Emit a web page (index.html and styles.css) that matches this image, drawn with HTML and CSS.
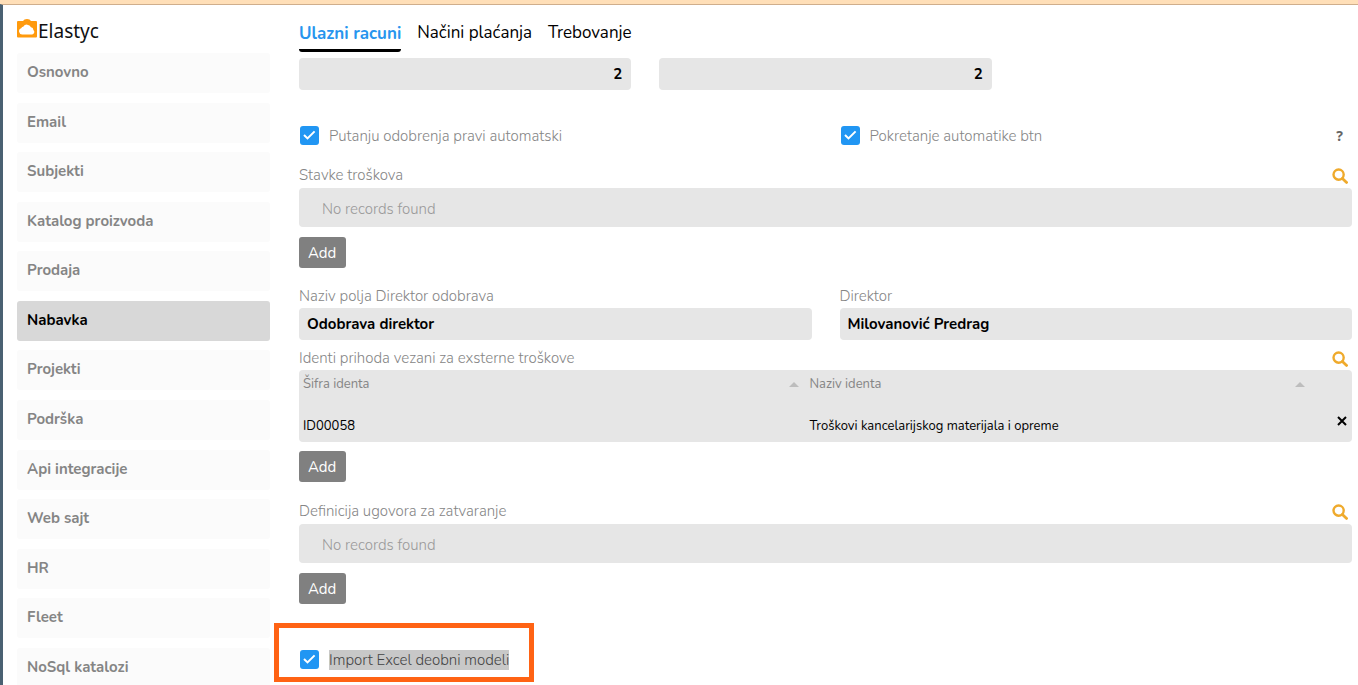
FILE: index.html
```html
<!DOCTYPE html>
<html lang="sr">
<head>
  <meta charset="utf-8">
  <meta name="viewport" content="width=device-width, initial-scale=1.0">
  <title>Elastyc</title>
  <link rel="stylesheet" href="styles.css">
</head>

<body>
  <svg class="defs" aria-hidden="true">
    <symbol id="search" viewBox="0 0 16 16">
      <circle cx="6.6" cy="6.6" r="5.1" fill="none" stroke="currentColor" stroke-width="2.4"/>
      <path d="M10.4 10.4L14.6 14.4" stroke="currentColor" stroke-width="2.8" stroke-linecap="round"/>
    </symbol>
  </svg>

  <div class="page">
    <aside class="sidebar">
      <a class="logo" href="#">
        <svg width="20" height="20" viewBox="0 0 20 20" aria-hidden="true">
          <path d="M0 3Q0 2 1 2H6Q7 0 10 0T14 2H19Q20 2 20 3V17.500Q20 18.500 19 18.500H1Q0 18.500 0 17.500Z" fill="#ff9a0d"/>
          <path d="M5.200 15.600A3.300 3.300 0 0 1 4.200 9.200Q5 7.800 6.200 7.800A4.400 4.400 0 0 1 14 8.200A2.800 2.800 0 0 1 16.400 10.900A2.700 2.700 0 0 1 15.200 15.600Z" fill="#fff"/>
        </svg>
        <span>Elastyc</span>
      </a>
      <nav class="menu">
        <a href="#">Osnovno</a>
        <a href="#">Email</a>
        <a href="#">Subjekti</a>
        <a href="#">Katalog proizvoda</a>
        <a href="#">Prodaja</a>
        <a href="#" class="active">Nabavka</a>
        <a href="#">Projekti</a>
        <a href="#">Podrška</a>
        <a href="#">Api integracije</a>
        <a href="#">Web sajt</a>
        <a href="#">HR</a>
        <a href="#">Fleet</a>
        <a href="#">NoSql katalozi</a>
      </nav>
    </aside>

    <main class="content">
      <div class="tabs">
        <a href="#" class="active">Ulazni racuni</a>
        <a href="#">Načini plaćanja</a>
        <a href="#">Trebovanje</a>
      </div>

      <div class="row thirds">
        <input class="field number" type="text" value="2" aria-label="Broj 1">
        <input class="field number" type="text" value="2" aria-label="Broj 2">
      </div>

      <div class="row halves checks">
        <label class="check"><input type="checkbox" checked><span>Putanju odobrenja pravi automatski</span></label>
        <div class="with-help">
          <label class="check"><input type="checkbox" checked><span>Pokretanje automatike btn</span></label>
          <button class="help" type="button">?</button>
        </div>
      </div>

      <section class="list">
        <div class="caption">
          <h2>Stavke troškova</h2>
          <button class="search" type="button" aria-label="Search"><svg><use href="#search"/></svg></button>
        </div>
        <div class="empty">No records found</div>
        <button class="add" type="button">Add</button>
      </section>

      <div class="row halves people">
        <div>
          <label for="polje">Naziv polja Direktor odobrava</label>
          <input class="field" id="polje" type="text" value="Odobrava direktor">
        </div>
        <div>
          <label for="direktor">Direktor</label>
          <input class="field" id="direktor" type="text" value="Milovanović Predrag">
        </div>
      </div>

      <section class="list idents">
        <div class="caption">
          <h2>Identi prihoda vezani za exsterne troškove</h2>
          <button class="search" type="button" aria-label="Search"><svg><use href="#search"/></svg></button>
        </div>
        <table>
          <thead>
            <tr>
              <th><div class="sort">Šifra identa</div></th>
              <th><div class="sort">Naziv identa</div></th>
              <th class="tools"></th>
            </tr>
          </thead>
          <tbody>
            <tr>
              <td>ID00058</td>
              <td>Troškovi kancelarijskog materijala i opreme</td>
              <td class="tools">
                <button class="remove" type="button" aria-label="Remove">
                  <svg viewBox="0 0 10 10"><path d="M1 1L9 9M9 1L1 9" stroke="currentColor" stroke-width="2"/></svg>
                </button>
              </td>
            </tr>
          </tbody>
        </table>
        <button class="add" type="button">Add</button>
      </section>

      <section class="list">
        <div class="caption">
          <h2>Definicija ugovora za zatvaranje</h2>
          <button class="search" type="button" aria-label="Search"><svg><use href="#search"/></svg></button>
        </div>
        <div class="empty">No records found</div>
        <button class="add" type="button">Add</button>
      </section>

      <div class="callout">
        <label class="check"><input type="checkbox" checked><span class="selected">Import Excel deobni modeli</span></label>
      </div>
    </main>
  </div>
</body>
</html>
```

FILE: styles.css
```css
* {
  box-sizing: border-box;
}
body {
  margin: 0;
  height: 100vh;
  overflow: hidden;
  display: flex;
  flex-direction: column;
  border-top: 4px solid #ffdfb8;
  background: #fff;
  color: #858585;
  font-family: Nunito, Lato, sans-serif;
  font-size: 15px;
  font-weight: 300;
  line-height: 20px;
}
a {
  color: inherit;
  text-decoration: none;
}
button,
input {
  font-family: inherit;
}
button {
  padding: 0;
  border: 0;
  background: none;
  cursor: pointer;
}
.defs {
  position: absolute;
  width: 0;
  height: 0;
}
.page {
  flex: 1;
  min-height: 0;
  display: flex;
  gap: 29px;
  padding: 0 6px 0 14px;
  border-top: 1px solid #cfae8c;
  border-left: 3px solid #4a6172;
}

/* sidebar */
.sidebar {
  flex: 0 0 253px;
  display: flex;
  flex-direction: column;
}
.logo {
  display: flex;
  gap: 1px;
  height: 48px;
  padding-top: 14px;
  color: #111;
  font-family: "Noto Sans", sans-serif;
  font-size: 19px;
  font-weight: 400;
}
.logo svg {
  flex: none;
}
.logo span {
  line-height: 24px;
}
.menu {
  flex: 1;
  display: flex;
  flex-direction: column;
  justify-content: space-between;
  margin-bottom: -3px;
}
.menu a {
  flex: none;
  height: 40px;
  padding: 0 10px;
  border-radius: 3px;
  background: #fbfbfb;
  font-weight: 700;
  line-height: 38px;
}
.menu a.active {
  background: #d8d8d8;
  color: #000;
}

/* content */
.content {
  flex: 1;
  min-width: 0;
}
.tabs {
  display: flex;
  gap: 16px;
  margin-bottom: 6px;
  color: #000;
  font-size: 17px;
  font-weight: 400;
  line-height: 22px;
}
.tabs a {
  padding: 17px 0 5px;
}
.tabs a.active {
  padding-top: 18px;
  padding-bottom: 4px;
  border-bottom: 3px solid #000;
  border-radius: 0 0 3px 3px;
  color: #2795ee;
  font-weight: 700;
}
.row {
  display: grid;
  column-gap: 28px;
}
.thirds {
  grid-template-columns: repeat(3, 1fr);
}
.halves {
  grid-template-columns: repeat(2, 1fr);
}
.field {
  display: block;
  width: 100%;
  height: 32px;
  padding: 0 8px;
  border: 0;
  border-radius: 4px;
  background: #e6e6e6;
  color: #000;
  font-size: 15px;
  font-weight: 700;
}
.number {
  padding-right: 9px;
  text-align: right;
}
.checks {
  margin: 36px 0 19px;
}
.with-help {
  display: flex;
  justify-content: space-between;
}
.help {
  margin-right: 9px;
  color: #666;
  font-family: "Noto Sans", sans-serif;
  font-size: 14px;
  font-weight: 700;
  line-height: 18px;
}
.check {
  display: flex;
  align-items: flex-start;
  gap: 10px;
  height: 20px;
  padding-left: 1px;
}
.check input {
  appearance: none;
  width: 19px;
  height: 19px;
  margin: 0;
  border-radius: 3px;
  background: #2196f3 url("data:image/svg+xml,%3Csvg xmlns='http://www.w3.org/2000/svg' viewBox='0 0 19 19'%3E%3Cpath d='M4 9L7.5 12.4L14.6 5.4' fill='none' stroke='white' stroke-width='2'/%3E%3C/svg%3E");
}
.people label {
  display: block;
  margin-bottom: 2px;
}
.caption {
  display: flex;
  justify-content: space-between;
  margin-bottom: 3px;
}
.caption h2 {
  margin: 0;
  font-size: inherit;
  font-weight: inherit;
}
.search {
  display: flex;
  align-items: center;
  height: 21px;
  margin-right: 4px;
  margin-bottom: -1px;
  color: #efaa2c;
}
.search svg {
  width: 16px;
  height: 16px;
}
.empty {
  height: 39px;
  padding: 0 23px;
  border-radius: 4px;
  background: #e6e6e6;
  color: #999;
  line-height: 42px;
}
.add {
  display: block;
  height: 31px;
  margin: 10px 0 18px;
  padding: 0 10px 0 9px;
  border-radius: 3px;
  background: #808080;
  color: #fff;
  font-size: 15px;
  font-weight: 400;
}
.idents {
  margin-top: 8px;
}
.idents .caption {
  margin-bottom: 2px;
}
.idents .add {
  margin-top: 9px;
  margin-bottom: 19px;
}
table {
  width: 100%;
  table-layout: fixed;
  border-collapse: collapse;
  border-radius: 4px;
  background: #e6e6e6;
  color: #000;
  font-size: 13px;
  font-weight: 400;
}
th,
td {
  padding: 0 5px 0 4px;
  text-align: left;
}
th {
  height: 28px;
  color: #858585;
  font-weight: 400;
}
td {
  height: 44px;
  padding-top: 12px;
}
.tools {
  width: 40px;
  text-align: right;
}
.sort {
  display: flex;
  align-items: center;
  justify-content: space-between;
}
.sort::after {
  content: "";
  margin-right: 2px;
  border: 5px solid transparent;
  border-top: 0;
  border-bottom-color: #bdbdbd;
}
.remove {
  display: inline-block;
  width: 10px;
  height: 10px;
  color: #000;
}
.remove svg {
  display: block;
}
td.tools {
  padding-top: 4px;
}

/* highlighted option */
.callout {
  position: relative;
  width: max-content;
  margin-top: 46px;
}
.callout::after {
  content: "";
  position: absolute;
  inset: -27px -25px -12px;
  border: 5px solid #ff6314;
  pointer-events: none;
}
.selected {
  background: #c8c8c8;
  color: #444;
}
```
